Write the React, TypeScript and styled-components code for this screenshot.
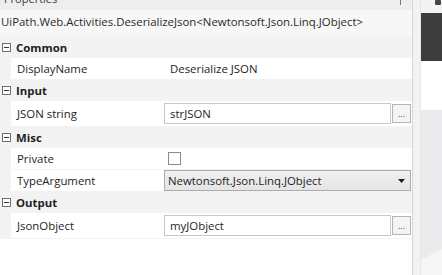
import React from 'react'
import styled, { createGlobalStyle } from 'styled-components'

const GlobalStyle = createGlobalStyle`
  html, body {
    margin: 0;
    padding: 0;
    background: #ffffff;
  }
  body {
    font-family: "Open Sans", "Noto Sans", sans-serif;
    font-size: 11.4px;
    color: #1e1e1e;
  }
`

type Prop = {
  label: string
  kind: 'text' | 'input' | 'check' | 'select'
  value?: string
}

type Category = {
  name: string
  props: Prop[]
}

const categories: Category[] = [
  { name: 'Common', props: [{ label: 'DisplayName', kind: 'text', value: 'Deserialize JSON' }] },
  { name: 'Input', props: [{ label: 'JSON string', kind: 'input', value: 'strJSON' }] },
  {
    name: 'Misc',
    props: [
      { label: 'Private', kind: 'check' },
      { label: 'TypeArgument', kind: 'select', value: 'Newtonsoft.Json.Linq.JObject' },
    ],
  },
  { name: 'Output', props: [{ label: 'JsonObject', kind: 'input', value: 'myJObject' }] },
]

const CollapseBox = () => (
  <svg width="9" height="9" viewBox="0 0 9 9">
    <rect x="0.5" y="0.5" width="8" height="8" fill="#fff" stroke="#6e6e6e" />
    <line x1="2" y1="4.5" x2="7" y2="4.5" stroke="#333" />
  </svg>
)

const DropArrow = () => (
  <svg width="7" height="4" viewBox="0 0 7 4">
    <path d="M0 0 H7 L3.5 4 Z" fill="#1e1e1e" />
  </svg>
)

const PropValue = ({ prop }: { prop: Prop }) => {
  if (prop.kind === 'text') return <PlainValue>{prop.value}</PlainValue>
  if (prop.kind === 'check') return <CheckBox />
  if (prop.kind === 'select')
    return (
      <Select>
        <span>{prop.value}</span>
        <DropArrow />
      </Select>
    )
  return (
    <InputWrap>
      <TextBox>{prop.value}</TextBox>
      <DotsButton>...</DotsButton>
    </InputWrap>
  )
}

const App = () => {
  return (
    <>
      <GlobalStyle />
      <Window>
        <Panel>
          <PanelHeader>
            <HeaderTitle>Properties</HeaderTitle>
            <PinMark />
          </PanelHeader>
          <TypeTitle>UiPath.Web.Activities.DeserializeJson&lt;Newtonsoft.Json.Linq.JObject&gt;</TypeTitle>
          <Grid>
            {categories.map(cat => (
              <React.Fragment key={cat.name}>
                <CategoryRow>
                  <CollapseBox />
                  <CategoryName>{cat.name}</CategoryName>
                </CategoryRow>
                {cat.props.map(p => (
                  <PropRow key={p.label} tall={p.kind === 'input'}>
                    <PropLabel>{p.label}</PropLabel>
                    <PropCell>
                      <PropValue prop={p} />
                    </PropCell>
                  </PropRow>
                ))}
              </React.Fragment>
            ))}
          </Grid>
        </Panel>
        <ScrollGutter />
        <SidePane>
          <SideTop>
            <SideIcon />
          </SideTop>
          <DarkBlock />
          <WhiteBlock />
          <GrayBlock />
        </SidePane>
      </Window>
    </>
  )
}

const Window = styled.div`
  display: flex;
  width: 442px;
  height: 275px;
  overflow: hidden;
  background: #ffffff;
`

const Panel = styled.div`
  width: 412px;
  display: flex;
  flex-direction: column;
  background: #ffffff;
  border-right: 1px solid #d6d6d6;
`

const PanelHeader = styled.div`
  height: 10px;
  background: #eeeeee;
  overflow: hidden;
  position: relative;
`

const HeaderTitle = styled.div`
  margin-top: -9px;
  padding-left: 4px;
  line-height: 16px;
  font-size: 11px;
  color: #3a3a3a;
`

const PinMark = styled.div`
  position: absolute;
  left: 400px;
  top: 0;
  width: 1px;
  height: 5px;
  background: #777;
`

const TypeTitle = styled.div`
  height: 25px;
  line-height: 24px;
  padding-left: 1px;
  background: #f7f7f7;
  white-space: nowrap;
  color: #2a2a2a;
`

const Grid = styled.div`
  display: flex;
  flex-direction: column;
  background: #f3f3f3;
  padding-top: 2px;
`

const CategoryRow = styled.div`
  height: 21px;
  display: flex;
  align-items: center;
  padding-left: 2px;
  gap: 5px;
`

const CategoryName = styled.span`
  font-weight: 700;
`

const PropRow = styled.div<{ tall?: boolean }>`
  height: ${p => (p.tall ? 25 : 21)}px;
  margin-left: 11px;
  margin-bottom: 1px;
  display: flex;
  align-items: center;
  background: #ffffff;
`

const PropLabel = styled.div`
  width: 153px;
  padding-left: 6px;
  box-sizing: border-box;
`

const PropCell = styled.div`
  flex: 1;
  display: flex;
  align-items: center;
  padding-right: 1px;
`

const PlainValue = styled.span`
  padding-left: 6px;
`

const InputWrap = styled.div`
  display: flex;
  align-items: center;
  width: 100%;
  gap: 1px;
`

const TextBox = styled.div`
  flex: 1;
  height: 21px;
  box-sizing: border-box;
  border: 1px solid #c8c8c8;
  padding-left: 5px;
  line-height: 19px;
  background: #ffffff;
`

const DotsButton = styled.div`
  width: 19px;
  height: 19px;
  box-sizing: border-box;
  border: 1px solid #b4b4b4;
  background: #f4f4f4;
  font-size: 9px;
  text-align: center;
  line-height: 17px;
  color: #444;
`

const CheckBox = styled.div`
  width: 13px;
  height: 13px;
  margin-left: 4px;
  box-sizing: border-box;
  border: 1px solid #8c8c8c;
  background: #ffffff;
`

const Select = styled.div`
  width: 100%;
  height: 21px;
  box-sizing: border-box;
  border: 1px solid #acacac;
  background: linear-gradient(#f0f0f0, #e5e5e5);
  display: flex;
  align-items: center;
  justify-content: space-between;
  padding: 0 5px 0 3px;
`

const ScrollGutter = styled.div`
  width: 7px;
  background: #f2f2f2;
  border-right: 1px solid #e6e6e6;
`

const SidePane = styled.div`
  flex: 1;
  display: flex;
  flex-direction: column;
  background: #ececec;
`

const SideTop = styled.div`
  height: 13px;
  background: #f3f3f3;
  position: relative;
`

const SideIcon = styled.div`
  position: absolute;
  left: 14px;
  top: 0;
  width: 6px;
  height: 5px;
  background: #444;
  border-radius: 1px;
`

const DarkBlock = styled.div`
  height: 48px;
  background: #3d3d3d;
`

const WhiteBlock = styled.div`
  height: 49px;
  background: #ffffff;
`

const GrayBlock = styled.div`
  flex: 1;
  background: linear-gradient(155deg, #ebebee 85%, #f6f6f6 86%);
`

export default App
